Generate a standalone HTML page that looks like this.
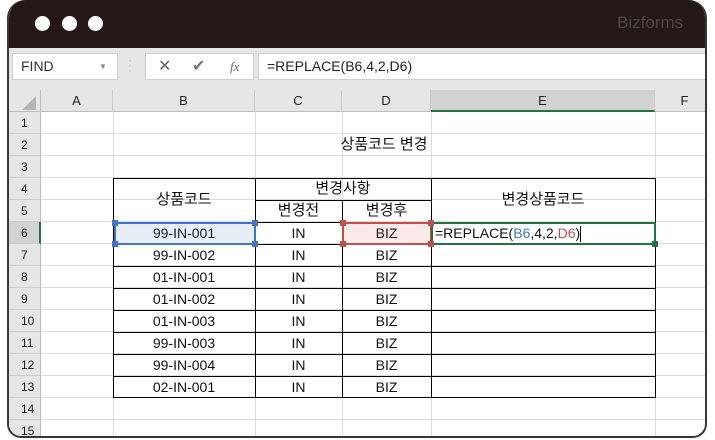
<!DOCTYPE html>
<html><head><meta charset="utf-8"><style>
*{margin:0;padding:0;box-sizing:border-box}
body{width:715px;height:440px;background:#fff;position:relative;overflow:hidden;font-family:"Liberation Sans","Noto Sans CJK KR",sans-serif}
.a{position:absolute}
.frame{left:7px;top:0;width:700px;height:438px;border:2px solid #3a3634;border-top:none;border-radius:18px 18px 14px 14px;overflow:hidden;background:#fff}
.title{left:0;top:0;width:700px;height:48px;background:#231815}
.dot{width:15px;height:15px;border-radius:50%;background:#fff;top:16px}
.fb{left:0;top:48px;width:700px;height:42px;background:#e6e6e6}
.box{background:#fff;border:1px solid #cfcfcf;height:27px;top:5px}
.ch{top:90px;height:22px;background:#e6e6e6;border-right:1px solid #cbcbcb;border-bottom:1px solid #bdbdbd;font-size:13px;text-align:center;line-height:22px;color:#222}
.rh{left:0;width:32px;background:#e6e6e6;border-bottom:1px solid #cbcbcb;border-right:1px solid #bdbdbd;font-size:12px;padding-left:12px;line-height:22px;color:#222}
.gl{background:#dcdcdc}
.c{font-size:14px;text-align:center;color:#111}
</style></head><body>
<div class="a frame">
 <div class="a title"></div>
 <div class="a dot" style="left:26px"></div><div class="a dot" style="left:53px"></div><div class="a dot" style="left:79px"></div>
 <div class="a" style="left:608px;top:13px;color:#4e4745;font-size:17px">Bizforms</div>
 <div class="a fb">
  <div class="a box" style="left:3px;width:106px;font-size:14px;line-height:25px;padding-left:8px;color:#333">FIND<span class="a" style="left:86px;top:0;font-size:8px;color:#888">▼</span></div>
  <div class="a" style="left:119px;top:10px;color:#bbb;font-size:12px;line-height:5px">·<br>·<br>·</div>
  <div class="a box" style="left:136px;width:109px;color:#666;font-size:16px;line-height:25px"><span class="a" style="left:12px">✕</span><span class="a" style="left:46px;color:#777">✔</span><span class="a" style="left:84px;font-family:'Liberation Serif',serif;font-style:italic;font-size:13px">fx</span></div>
  <div class="a box" style="left:249px;width:450px;font-size:14px;line-height:25px;padding-left:8px;color:#222">=REPLACE(B6,4,2,D6)</div>
 </div>
 <div class="a" style="left:0;top:90px;width:32px;height:22px;background:#e6e6e6;border-right:1px solid #bdbdbd;border-bottom:1px solid #bdbdbd"><div class="a" style="left:13px;top:6px;width:0;height:0;border-left:14px solid transparent;border-bottom:14px solid #b4b4b4"></div></div>
 <div class="a ch" style="left:32px;width:72px">A</div>
 <div class="a ch" style="left:104px;width:142px">B</div>
 <div class="a ch" style="left:246px;width:87px">C</div>
 <div class="a ch" style="left:333px;width:89px">D</div>
 <div class="a ch" style="left:422px;width:224px;background:#d2d2d2;border-bottom:2px solid #217346">E</div>
 <div class="a ch" style="left:646px;width:60px">F</div>
 <div id="rows"></div>
</div>
<script>
var f=document.querySelector('.frame'),h='';
for(var i=1;i<=15;i++){var y=112+(i-1)*22;
h+='<div class="a rh" style="top:'+y+'px;height:22px;'+(i==6?'background:#d2d2d2;border-right:2px solid #217346;':'')+'">'+i+'</div>';
h+='<div class="a gl" style="left:32px;top:'+(y+21)+'px;width:670px;height:1px"></div>';}
[104,246,333,422,646].forEach(function(x){h+='<div class="a gl" style="left:'+x+'px;top:112px;width:1px;height:330px"></div>'});
function L(x,y,w,hh){h+='<div class="a" style="left:'+x+'px;top:'+y+'px;width:'+w+'px;height:'+hh+'px;background:#000"></div>'}
L(104,178,543,1);L(104,397,543,1);L(104,178,1,220);L(646,178,1,220);L(246,178,1,220);L(422,178,1,220);L(333,200,1,198);L(246,200,176,1);
for(var r=6;r<=13;r++)L(104,112+(r-1)*22,542,1);
function T(x,y,w,t,st){h+='<div class="a c" style="left:'+x+'px;top:'+y+'px;width:'+w+'px;line-height:22px;'+(st||'')+'">'+t+'</div>'}
T(104,134,542,'상품코드 변경','font-size:15px');
T(104,178,142,'상품코드','line-height:44px;font-size:15px');
T(246,178,176,'변경사항','font-size:15px');T(246,200,87,'변경전','font-size:15px');T(333,200,89,'변경후','font-size:15px');
T(422,178,224,'변경상품코드','line-height:44px;font-size:15px');
var codes=['99-IN-001','99-IN-002','01-IN-001','01-IN-002','01-IN-003','99-IN-003','99-IN-004','02-IN-001'];
codes.forEach(function(c,k){var y=222+k*22;T(104,y,142,c);T(246,y,87,'IN');T(333,y,89,'BIZ');});
h+='<div class="a" style="left:105px;top:222px;width:142px;height:23px;border:2px solid #4472c4;background:rgba(68,114,196,.12)"></div>';
h+='<div class="a" style="left:333px;top:222px;width:90px;height:23px;border:2px solid #c0504d;background:rgba(192,80,77,.12)"></div>';
h+='<div class="a" style="left:422px;top:222px;width:225px;height:23px;border:2px solid #217346"></div>';
[[103,220],[243,220],[103,241],[243,241]].forEach(function(p){h+='<div class="a" style="left:'+p[0]+'px;top:'+p[1]+'px;width:6px;height:6px;background:#4472c4"></div>'});
[[331,220],[419,220],[331,241],[419,241]].forEach(function(p){h+='<div class="a" style="left:'+p[0]+'px;top:'+p[1]+'px;width:6px;height:6px;background:#c0504d"></div>'});
h+='<div class="a" style="left:643px;top:241px;width:6px;height:6px;background:#217346"></div>';
h+='<div class="a" style="left:426px;top:222px;font-size:14px;line-height:23px;color:#111">=REPLACE(<span style="color:#4472c4">B6</span>,4,2,<span style="color:#c0504d">D6</span>)<span style="display:inline-block;width:1px;height:16px;background:#000;vertical-align:middle"></span></div>';
document.getElementById('rows').innerHTML=h;
</script>
</body></html>
